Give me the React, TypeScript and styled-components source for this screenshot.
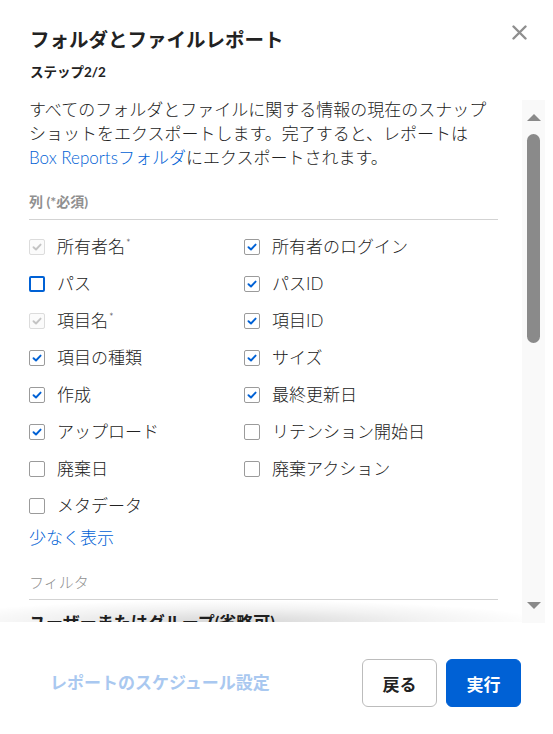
import React from "react";
import styled, { createGlobalStyle } from "styled-components";

const GlobalStyle = createGlobalStyle`
  html, body {
    margin: 0;
    padding: 0;
    background: #fff;
  }
  * {
    box-sizing: border-box;
  }
`;

const FONT = `Lato, "Noto Sans CJK JP", "Noto Sans", sans-serif`;

// モーダル全体
const Modal = styled.div`
  position: relative;
  width: 553px;
  height: 734px;
  display: flex;
  flex-direction: column;
  background: #fff;
  font-family: ${FONT};
  color: #222;
`;

const Header = styled.div`
  padding: 26px 30px 16px 30px;
  height: 98px;
`;

const Title = styled.h1`
  margin: 0;
  font-size: 19.5px;
  line-height: 28px;
  font-weight: 700;
  color: #222;
`;

const Step = styled.div`
  margin-top: 8px;
  font-size: 13.5px;
  line-height: 20px;
  font-weight: 700;
  color: #222;
`;

const CloseButton = styled.button`
  position: absolute;
  top: 24px;
  right: 26px;
  width: 16px;
  height: 16px;
  padding: 0;
  border: none;
  background: none;
  display: flex;
  align-items: center;
  justify-content: center;
  cursor: pointer;
`;

const Body = styled.div`
  position: relative;
  height: 524px;
  display: flex;
`;

const Content = styled.div`
  flex: 1;
  overflow: hidden;
  padding: 0 24px 0 29px;
`;

const Description = styled.p`
  margin: 0;
  font-size: 17px;
  line-height: 24px;
  font-weight: 300;
  color: #222;
`;

const Link = styled.a`
  color: #0061d5;
  text-decoration: none;
  white-space: nowrap;
  cursor: pointer;
`;

const SectionLabel = styled.div<{ $bold?: boolean; $top: number }>`
  margin-top: ${(p) => p.$top}px;
  padding-bottom: 7px;
  border-bottom: 1px solid #d3d3d3;
  font-size: ${(p) => (p.$bold ? 14 : 15)}px;
  line-height: 20px;
  font-weight: ${(p) => (p.$bold ? 700 : 300)};
  color: #909090;
`;

const Grid = styled.div`
  margin-top: 8px;
  display: grid;
  grid-template-columns: 215px 1fr;
  grid-auto-rows: 37px;
`;

const Option = styled.label`
  display: flex;
  align-items: center;
  gap: 12px;
  font-size: 17px;
  line-height: 24px;
  font-weight: 300;
  color: #222;
`;

type BoxState = "checked" | "unchecked" | "disabled" | "focus";

const Box = styled.span<{ $state: BoxState }>`
  flex: none;
  width: 16px;
  height: 16px;
  border-radius: 2px;
  display: flex;
  align-items: center;
  justify-content: center;
  background: ${(p) => (p.$state === "disabled" ? "#fbfbfb" : "#fff")};
  border: ${(p) =>
    p.$state === "focus"
      ? "2px solid #0061d5"
      : p.$state === "disabled"
      ? "1px solid #dcdcdc"
      : "1px solid #9b9b9b"};
`;

const Asterisk = styled.sup`
  font-size: 11px;
  line-height: 0;
  vertical-align: 6px;
  margin-left: 1px;
`;

const ShowLess = styled(Link)`
  display: block;
  margin-top: 2px;
  font-size: 17px;
  line-height: 24px;
  font-weight: 300;
`;

const SubTitle = styled.div`
  margin-top: 11px;
  font-size: 17px;
  line-height: 24px;
  font-weight: 700;
  color: #222;
`;

// 下端の影
const BottomShade = styled.div`
  position: absolute;
  left: 0;
  right: 31px;
  bottom: 0;
  height: 22px;
  pointer-events: none;
  background: radial-gradient(
    ellipse 60% 100% at 45% 100%,
    rgba(0, 0, 0, 0.16),
    rgba(0, 0, 0, 0.05) 60%,
    rgba(255, 255, 255, 0) 100%
  );
`;

// スクロールバー
const ScrollTrack = styled.div`
  flex: none;
  width: 23px;
  margin: 2px 8px 0 0;
  height: 523px;
  background: #f9f9f9;
  display: flex;
  flex-direction: column;
  align-items: center;
  padding: 14px 0 14px;
`;

const Arrow = styled.span<{ $down?: boolean }>`
  flex: none;
  width: 0;
  height: 0;
  border-left: 7px solid transparent;
  border-right: 7px solid transparent;
  ${(p) =>
    p.$down
      ? "border-top: 7px solid #8a8a8a;"
      : "border-bottom: 7px solid #8a8a8a;"}
`;

const Thumb = styled.span`
  flex: none;
  margin-top: 13px;
  width: 13px;
  height: 209px;
  border-radius: 7px;
  background: #8a8a8a;
`;

const Spacer = styled.span`
  flex: 1;
`;

const Footer = styled.div`
  flex: 1;
  display: flex;
  align-items: flex-start;
  padding: 37px 32px 0 50px;
`;

const ScheduleLink = styled.span`
  flex: 1;
  margin-top: 12px;
  font-size: 17px;
  line-height: 24px;
  font-weight: 700;
  color: #a9c8f0;
`;

const Button = styled.button<{ $primary?: boolean }>`
  width: 75px;
  height: 48px;
  margin-left: ${(p) => (p.$primary ? 9 : 0)}px;
  border-radius: 6px;
  font-family: ${FONT};
  font-size: 17px;
  font-weight: 700;
  cursor: pointer;
  color: ${(p) => (p.$primary ? "#fff" : "#222")};
  background: ${(p) => (p.$primary ? "#0061d5" : "#fff")};
  border: 1px solid ${(p) => (p.$primary ? "#0061d5" : "#bcbcbc")};
`;

const Check = ({ color }: { color: string }) => (
  <svg width="10" height="8" viewBox="0 0 10 8">
    <path
      d="M1.5 4.2 L4 6.5 L8.6 1.6"
      fill="none"
      stroke={color}
      strokeWidth="1.9"
      strokeLinecap="round"
      strokeLinejoin="round"
    />
  </svg>
);

type Col = { label: string; state: BoxState; required?: boolean };

const columns: Col[] = [
  { label: "所有者名", state: "disabled", required: true },
  { label: "所有者のログイン", state: "checked" },
  { label: "パス", state: "focus" },
  { label: "パスID", state: "checked" },
  { label: "項目名", state: "disabled", required: true },
  { label: "項目ID", state: "checked" },
  { label: "項目の種類", state: "checked" },
  { label: "サイズ", state: "checked" },
  { label: "作成", state: "checked" },
  { label: "最終更新日", state: "checked" },
  { label: "アップロード", state: "checked" },
  { label: "リテンション開始日", state: "unchecked" },
  { label: "廃棄日", state: "unchecked" },
  { label: "廃棄アクション", state: "unchecked" },
  { label: "メタデータ", state: "unchecked" },
];

const App = () => {
  return (
    <Modal>
      <GlobalStyle />
      <Header>
        <Title>フォルダとファイルレポート</Title>
        <Step>ステップ2/2</Step>
      </Header>
      <CloseButton aria-label="閉じる">
        <svg width="15" height="15" viewBox="0 0 15 15">
          <path
            d="M1.5 1.5 L13.5 13.5 M13.5 1.5 L1.5 13.5"
            stroke="#8f8f8f"
            strokeWidth="2.4"
            strokeLinecap="round"
          />
        </svg>
      </CloseButton>

      <Body>
        <Content>
          <Description>
            すべてのフォルダとファイルに関する情報の現在のスナップショットをエクスポートします。完了すると、レポートは
            <Link>Box Reportsフォルダ</Link>
            にエクスポートされます。
          </Description>

          <SectionLabel $bold $top={22}>
            列 (*必須)
          </SectionLabel>
          <Grid>
            {columns.map((c) => (
              <Option key={c.label}>
                <Box $state={c.state}>
                  {c.state === "checked" && <Check color="#0061d5" />}
                  {c.state === "disabled" && <Check color="#c4c4c4" />}
                </Box>
                <span>
                  {c.label}
                  {c.required && <Asterisk>*</Asterisk>}
                </span>
              </Option>
            ))}
          </Grid>
          <ShowLess>少なく表示</ShowLess>

          <SectionLabel $top={22}>フィルタ</SectionLabel>
          <SubTitle>ユーザーまたはグループ(省略可)</SubTitle>
        </Content>
        <ScrollTrack>
          <Arrow />
          <Thumb />
          <Spacer />
          <Arrow $down />
        </ScrollTrack>
        <BottomShade />
      </Body>

      <Footer>
        <ScheduleLink>レポートのスケジュール設定</ScheduleLink>
        <Button>戻る</Button>
        <Button $primary>実行</Button>
      </Footer>
    </Modal>
  );
};

export default App;
